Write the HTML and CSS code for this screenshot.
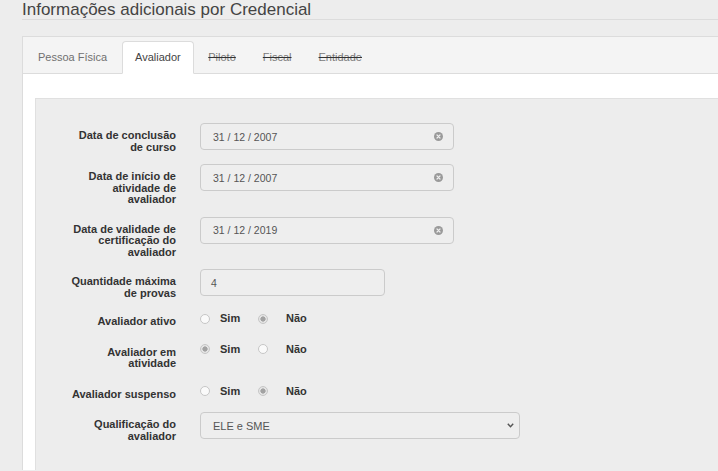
FILE: index.html
```html
<!DOCTYPE html>
<html lang="pt-BR">
<head>
<meta charset="utf-8">
<title>Informações adicionais por Credencial</title>
<link rel="stylesheet" href="styles.css">
</head>
<body>
<div class="page">
  <h1 class="title">Informações adicionais por Credencial</h1>
  <div class="panel">
    <ul class="tabs">
      <li class="tab">Pessoa Física</li>
      <li class="tab active">Avaliador</li>
      <li class="tab disabled">Piloto</li>
      <li class="tab disabled">Fiscal</li>
      <li class="tab disabled">Entidade</li>
    </ul>
    <div class="tab-content">
      <div class="well">
        <div class="form">
          <div class="row">
            <div class="lbl">Data de conclusão de curso</div>
            <div class="field date"><span class="val">31 / 12 / 2007</span>
              <svg class="clear" width="9" height="9" viewBox="0 0 9 9"><circle cx="4.5" cy="4.5" r="4.5" fill="#9a9a9a"/><path d="M3 3 L6 6 M6 3 L3 6" stroke="#eee" stroke-width="1.2" stroke-linecap="round"/></svg>
            </div>
          </div>
          <div class="row">
            <div class="lbl">Data de início de atividade de avaliador</div>
            <div class="field date"><span class="val">31 / 12 / 2007</span>
              <svg class="clear" width="9" height="9" viewBox="0 0 9 9"><circle cx="4.5" cy="4.5" r="4.5" fill="#9a9a9a"/><path d="M3 3 L6 6 M6 3 L3 6" stroke="#eee" stroke-width="1.2" stroke-linecap="round"/></svg>
            </div>
          </div>
          <div class="row">
            <div class="lbl">Data de validade de certificação do avaliador</div>
            <div class="field date"><span class="val">31 / 12 / 2019</span>
              <svg class="clear" width="9" height="9" viewBox="0 0 9 9"><circle cx="4.5" cy="4.5" r="4.5" fill="#9a9a9a"/><path d="M3 3 L6 6 M6 3 L3 6" stroke="#eee" stroke-width="1.2" stroke-linecap="round"/></svg>
            </div>
          </div>
          <div class="row row-tight">
            <div class="lbl">Quantidade máxima de provas</div>
            <div class="field qty"><span class="val">4</span></div>
          </div>
          <div class="row row-radio">
            <div class="lbl">Avaliador ativo</div>
            <div class="radios">
              <span class="opt"><span class="dot"></span>Sim</span>
              <span class="opt"><span class="dot on"></span>Não</span>
            </div>
          </div>
          <div class="row row-radio">
            <div class="lbl">Avaliador em atividade</div>
            <div class="radios">
              <span class="opt"><span class="dot on"></span>Sim</span>
              <span class="opt"><span class="dot"></span>Não</span>
            </div>
          </div>
          <div class="row row-radio">
            <div class="lbl">Avaliador suspenso</div>
            <div class="radios">
              <span class="opt"><span class="dot"></span>Sim</span>
              <span class="opt"><span class="dot on"></span>Não</span>
            </div>
          </div>
          <div class="row">
            <div class="lbl">Qualificação do avaliador</div>
            <div class="field select"><span class="val">ELE e SME</span>
              <svg class="chev" width="7" height="5" viewBox="0 0 7 5"><path d="M0.8 0.8 L3.5 3.8 L6.2 0.8" fill="none" stroke="#555" stroke-width="1.4"/></svg>
            </div>
          </div>
        </div>
      </div>
    </div>
  </div>
</div>
</body>
</html>
```
FILE: styles.css
```css
html, body {
  margin: 0;
  padding: 0;
  background: #ededed;
  overflow: hidden;
  font-family: "Liberation Sans", Arial, sans-serif;
  color: #333;
}

.page {
  padding-left: 22px;
  margin-right: -20px;
}

.title {
  margin: 1px 0 0 0;
  font-size: 17px;
  line-height: 18px;
  font-weight: normal;
  color: #444;
  border-bottom: 1px solid #dcdcdc;
}

.panel {
  margin-top: 16px;
  border: 1px solid #dcdcdc;
  border-bottom: none;
  background: #fff;
}

.tabs {
  list-style: none;
  margin: 0;
  padding: 4px 0 0 2px;
  display: flex;
  background: #f4f4f4;
  border-bottom: 1px solid #dcdcdc;
}

.tab {
  height: 33px;
  box-sizing: border-box;
  line-height: 31px;
  padding: 0 12px;
  margin: 0 2px -1px 0;
  border: 1px solid transparent;
  border-radius: 4px 4px 0 0;
  font-size: 11px;
  color: #707070;
}

.tab.disabled {
  padding: 0 11.5px;
}

.tab.active {
  background: #fff;
  border-color: #dcdcdc;
  border-bottom-color: #fff;
  color: #444;
}

.tab.disabled {
  color: #7a7a7a;
  text-decoration: line-through;
  text-decoration-color: #333;
}

.tab-content {
  padding: 24px 0 0 12px;
  background: #fff;
}

.well {
  background: #ededed;
  border-top: 1px solid #e0e0e0;
  border-left: 1px solid #e0e0e0;
  padding: 24px 0 0 28px;
  min-height: 347px;
  box-sizing: border-box;
  height: 372px;
}

.form {
  display: flex;
  flex-direction: column;
  gap: 11px;
}

.row {
  display: flex;
  align-items: flex-start;
  gap: 24px;
}

.row-tight {
  margin-bottom: -1px;
}

.row-radio {
  margin-bottom: 1px;
}

.lbl {
  width: 112px;
  flex: none;
  text-align: right;
  font-size: 11px;
  line-height: 11.5px;
  font-weight: bold;
  color: #333;
  padding-top: 7px;
}

.field {
  display: flex;
  align-items: center;
  justify-content: space-between;
  height: 27px;
  box-sizing: border-box;
  border: 1px solid #cbcbcb;
  border-radius: 4px;
  background: #eeeeee;
  font-size: 10.5px;
  color: #555;
}

.field.date {
  width: 254px;
  padding: 0 10px 0 12px;
}

.field.qty {
  width: 185px;
  padding: 0 10px 0 10px;
}

.field.select {
  width: 320px;
  padding: 0 5px 0 12px;
}

.field.select .val {
  font-size: 11px;
}

.clear, .chev {
  display: block;
  flex: none;
}

.radios {
  display: flex;
  align-items: center;
  padding-top: 4px;
  line-height: 11.5px;
  font-size: 11px;
  font-weight: bold;
  color: #333;
}

.opt {
  display: flex;
  align-items: center;
  width: 58px;
}

.dot {
  width: 10px;
  height: 10px;
  box-sizing: border-box;
  border-radius: 50%;
  border: 1px solid #c6c6c6;
  background: #fafafa;
  margin-right: 10px;
  flex: none;
}

.opt + .opt .dot {
  margin-right: 18px;
}

.dot.on {
  background: radial-gradient(circle, #a2a2a2 0, #a2a2a2 2.3px, #e4e4e4 2.9px);
}
```
